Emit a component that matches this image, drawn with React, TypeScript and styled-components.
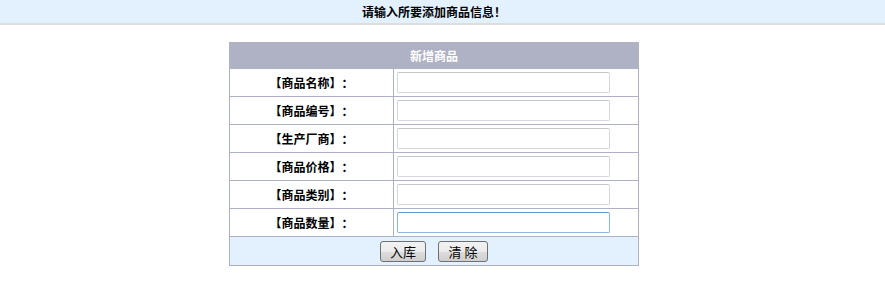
import styled, { createGlobalStyle } from 'styled-components';

const GlobalStyle = createGlobalStyle`
    body {
        margin: 0;
        background: #fff;
        font-family: "Noto Sans CJK SC", "Liberation Sans", sans-serif;
        font-size: 12px;
        color: #000;
        text-spacing-trim: space-all;
    }
`

const fields = ['商品名称', '商品编号', '生产厂商', '商品价格', '商品类别', '商品数量']

const App = () => {
    return (
        <>
            <GlobalStyle />
            <Banner>请输入所要添加商品信息！</Banner>
            <Page>
                <FormTable>
                    <tbody>
                        <tr>
                            <HeadCell colSpan={2}>新增商品</HeadCell>
                        </tr>
                        {fields.map((f, i) =>
                            <tr key={f}>
                                <LabelCell>【{f}】：</LabelCell>
                                <InputCell>
                                    <TextInput type="text" $focused={i === fields.length - 1} />
                                </InputCell>
                            </tr>
                        )}
                        <tr>
                            <FooterCell colSpan={2}>
                                <Button $wide={false}>入库</Button>
                                <Button $wide={true}>清 除</Button>
                            </FooterCell>
                        </tr>
                    </tbody>
                </FormTable>
            </Page>
        </>
    );
};

export default App;

const Banner = styled.div`
    height: 23px;
    line-height: 23px;
    padding-right: 17px;
    background: #e3f1fe;
    border-bottom: 2px solid #dedede;
    text-align: center;
    font-weight: bold;
    font-size: 12px;
`

// the original page had a 17px scrollbar on the right
const Page = styled.div`
    padding-right: 17px;
`

const FormTable = styled.table`
    width: 410px;
    margin: 17px auto 0;
    border-collapse: collapse;
`

const HeadCell = styled.th`
    height: 25px;
    padding: 0;
    background: #afb1c5;
    color: #fff;
    font-weight: bold;
    font-size: 12px;
    border: 1px solid #afb1c5;
`

const LabelCell = styled.td`
    width: 163px;
    height: 27px;
    padding: 0;
    text-align: center;
    font-weight: bold;
    border: 1px solid #aeb0c6;
`

const InputCell = styled.td`
    height: 27px;
    padding: 0 0 0 3px;
    border: 1px solid #aeb0c6;
`

const TextInput = styled.input<{ $focused: boolean }>`
    display: block;
    box-sizing: border-box;
    width: 213px;
    height: 21px;
    margin: 0;
    border: 1px solid ${p => p.$focused ? '#87b7dc' : '#d5d7dd'};
    border-top-color: ${p => p.$focused ? '#5d9ccd' : '#c4c6cc'};
    border-radius: 2px;
    background: #fff;
    outline: none;
`

const FooterCell = styled.td`
    height: 28px;
    padding: 0;
    text-align: center;
    background: #e3f1fe;
    border: 1px solid #aeb0c6;
`

const Button = styled.button<{ $wide: boolean }>`
    box-sizing: border-box;
    width: ${p => p.$wide ? '50px' : '46px'};
    height: 21px;
    margin: 0 6px;
    padding: 0;
    font-family: "Noto Sans CJK SC", "Liberation Sans", sans-serif;
    font-size: 13px;
    color: #000;
    border: 1px solid #707070;
    border-radius: 3px;
    background: linear-gradient(#f2f2f2, #ebebeb 50%, #dddddd 51%, #cfcfcf);
    vertical-align: middle;
`
